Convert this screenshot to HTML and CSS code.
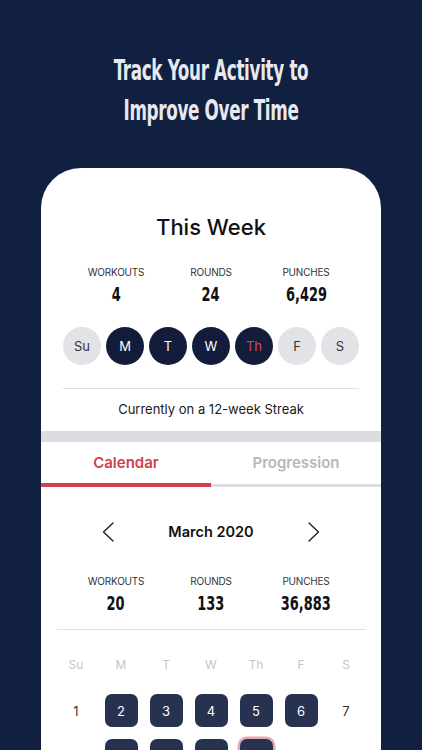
FILE: index.html
```html
<!DOCTYPE html>
<html lang="en">
<head>
<meta charset="utf-8">
<title>Track Your Activity</title>
<link rel="stylesheet" href="styles.css">
</head>
<body>
<div class="screen">
  <header class="hero">
    <h1 class="headline"><span class="squeeze">Track Your Activity to</span><span class="squeeze">Improve Over Time</span></h1>
  </header>
  <main class="card">
    <h2 class="week-title">This Week</h2>
    <div class="stats">
      <div class="stat"><div class="stat-label">WORKOUTS</div><div class="stat-value"><span>4</span></div></div>
      <div class="stat"><div class="stat-label">ROUNDS</div><div class="stat-value"><span>24</span></div></div>
      <div class="stat"><div class="stat-label">PUNCHES</div><div class="stat-value"><span>6,429</span></div></div>
    </div>
    <div class="days">
      <span class="day">Su</span>
      <span class="day done">M</span>
      <span class="day done">T</span>
      <span class="day done">W</span>
      <span class="day done today">Th</span>
      <span class="day">F</span>
      <span class="day">S</span>
    </div>
    <div class="rule"></div>
    <p class="streak">Currently on a 12-week Streak</p>
    <div class="band"></div>
    <nav class="tabs">
      <div class="tab active">Calendar</div>
      <div class="tab">Progression</div>
    </nav>
    <div class="month">
      <svg class="chev" width="12" height="20" viewBox="0 0 12 20"><polyline points="11,1 1.5,10 11,19" fill="none" stroke="#222" stroke-width="1.4" stroke-linecap="round" stroke-linejoin="round"/></svg>
      <span class="month-name">March 2020</span>
      <svg class="chev" width="12" height="20" viewBox="0 0 12 20"><polyline points="1,1 10.5,10 1,19" fill="none" stroke="#222" stroke-width="1.4" stroke-linecap="round" stroke-linejoin="round"/></svg>
    </div>
    <div class="stats stats-month">
      <div class="stat"><div class="stat-label">WORKOUTS</div><div class="stat-value"><span>20</span></div></div>
      <div class="stat"><div class="stat-label">ROUNDS</div><div class="stat-value"><span>133</span></div></div>
      <div class="stat"><div class="stat-label">PUNCHES</div><div class="stat-value"><span>36,883</span></div></div>
    </div>
    <div class="rule rule-wide"></div>
    <div class="weekdays">
      <span>Su</span><span>M</span><span>T</span><span>W</span><span>Th</span><span>F</span><span>S</span>
    </div>
    <div class="dates">
      <div class="date">1</div>
      <div class="date"><span class="sq">2</span></div>
      <div class="date"><span class="sq">3</span></div>
      <div class="date"><span class="sq">4</span></div>
      <div class="date"><span class="sq">5</span></div>
      <div class="date"><span class="sq">6</span></div>
      <div class="date">7</div>
      <div class="date"></div>
      <div class="date"><span class="sq"></span></div>
      <div class="date"><span class="sq"></span></div>
      <div class="date"><span class="sq"></span></div>
      <div class="date"><span class="sq today-sq"></span></div>
      <div class="date"></div>
      <div class="date"></div>
    </div>
  </main>
</div>
</body>
</html>
```
FILE: styles.css
```css
* { box-sizing: border-box; margin: 0; padding: 0; }
html, body { width: 422px; height: 750px; overflow: hidden; }
body {
  background: #111f41;
  font-family: Inter, "Noto Sans", sans-serif;
  color: #1a1a1a;
}
.screen { height: 750px; display: flex; flex-direction: column; }
.hero { padding-top: 51px; height: 168px; flex: none; }
.headline {
  font-family: "DejaVu Sans Condensed", "DejaVu Sans", sans-serif;
  font-stretch: condensed;
  font-weight: 700;
  font-size: 28.5px;
  line-height: 40px;
  color: #e7e9ef;
  text-align: center;
  letter-spacing: -0.5px;
}
.squeeze { display: block; transform: scaleX(0.655); }
.card {
  margin: 0 41px;
  flex: 1;
  background: #fff;
  border-radius: 40px 40px 0 0;
  padding-top: 45px;
}
.week-title {
  font-size: 22px;
  font-weight: 500;
  line-height: 28px;
  text-align: center;
  color: #111;
}
.stats {
  display: grid;
  grid-template-columns: repeat(3, 95px);
  justify-content: center;
  margin-top: 25px;
}
.stats-month { margin-top: 31px; }
.stat { text-align: center; display: flex; flex-direction: column; gap: 5px; }
.stat-label { font-size: 10px; line-height: 12px; color: #333; letter-spacing: -0.2px; }
.stat-value {
  font-family: "DejaVu Sans Condensed", "DejaVu Sans", sans-serif;
  font-stretch: condensed;
  font-weight: 700;
  font-size: 20px;
  line-height: 22px;
  color: #111;
}
.stat-value span { display: inline-block; transform: scaleX(0.72); }
.days { display: flex; gap: 5px; justify-content: center; margin-top: 22px; }
.day {
  width: 38px; height: 38px; border-radius: 50%;
  background: #e2e3e7;
  display: flex; align-items: center; justify-content: center;
  font-size: 13px; color: #333;
}
.day.done { background: #131d3b; color: #fff; }
.day.today { color: #d24a5a; }
.rule { width: 296px; height: 1px; background: #dedfe2; margin: 23px auto 0; }
.rule-wide { width: 309px; margin-top: 15px; }
.streak { text-align: center; font-size: 13px; line-height: 16px; margin-top: 12px; color: #1a1a1a; }
.band { height: 11px; background: #dcdde1; margin-top: 14px; }
.tabs { display: grid; grid-template-columns: 1fr 1fr; }
.tab {
  text-align: center; font-size: 15px; font-weight: 600; line-height: 20px;
  padding: 11px 0 11px; border-bottom: 3px solid #dcdde1; color: #b6b7bb;
}
.tab.active { color: #d2404f; border-bottom: 4px solid #d2404f; padding-bottom: 10px; }
.month {
  display: flex; align-items: center; justify-content: center;
  gap: 54px; height: 24px; margin-top: 33px;
}
.chev { display: block; }
.month-name { font-size: 14.5px; font-weight: 600; line-height: 20px; color: #111; }
.weekdays, .dates {
  display: grid;
  grid-template-columns: repeat(7, 45px);
  justify-content: center;
}
.weekdays { margin-top: 28px; }
.weekdays span { text-align: center; font-size: 12px; line-height: 14px; color: #c4c5c9; }
.dates { margin-top: 22px; row-gap: 12px; }
.date {
  height: 33px; display: flex; align-items: center; justify-content: center;
  font-size: 13px; color: #333;
}
.sq {
  width: 33px; height: 33px; border-radius: 7px;
  background: #26324f; color: #fff;
  display: flex; align-items: center; justify-content: center;
}
.today-sq { box-shadow: 0 0 0 2.5px #eaa6b2; }
```
